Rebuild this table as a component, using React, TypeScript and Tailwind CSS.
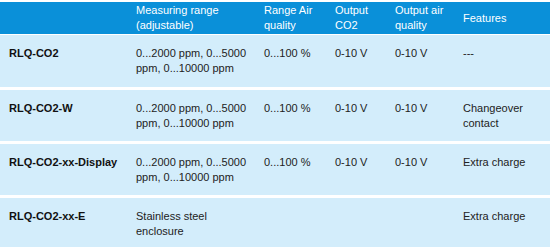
import React from "react";

type Row = {
  model: string;
  range: string;
  air: string;
  co2: string;
  outAir: string;
  features: string;
};

const rows: Row[] = [
  {
    model: "RLQ-CO2",
    range: "0...2000 ppm, 0...5000 ppm, 0...10000 ppm",
    air: "0...100 %",
    co2: "0-10 V",
    outAir: "0-10 V",
    features: "---",
  },
  {
    model: "RLQ-CO2-W",
    range: "0...2000 ppm, 0...5000 ppm, 0...10000 ppm",
    air: "0...100 %",
    co2: "0-10 V",
    outAir: "0-10 V",
    features: "Changeover contact",
  },
  {
    model: "RLQ-CO2-xx-Display",
    range: "0...2000 ppm, 0...5000 ppm, 0...10000 ppm",
    air: "0...100 %",
    co2: "0-10 V",
    outAir: "0-10 V",
    features: "Extra charge",
  },
  {
    model: "RLQ-CO2-xx-E",
    range: "Stainless steel enclosure",
    air: "",
    co2: "",
    outAir: "",
    features: "Extra charge",
  },
];

const cols = "grid grid-cols-[127px_128px_71px_60px_68px_1fr]";

export default function App() {
  return (
    <div className="w-[550px] h-[247px] overflow-hidden bg-white pt-[2px] font-['Liberation_Sans',Arial,sans-serif] text-[11px] leading-[15px]">
      {/* header */}
      <div className={`${cols} h-[32px] items-center bg-[#0a90d9] text-white`}>
        <div className="pl-[9px]" />
        <div className="pl-[9px] pr-[4px]">Measuring range (adjustable)</div>
        <div className="pl-[9px]">Range Air quality</div>
        <div className="pl-[9px]">Output CO2</div>
        <div className="pl-[9px]">Output air quality</div>
        <div className="pl-[9px]">Features</div>
      </div>

      <div className="flex flex-col gap-[3px] pt-[1px]">
        {rows.map((row, i) => (
          <div
            key={row.model}
            className={`${cols} bg-[#d3edfb] pt-[11px] text-[#222] ${
              i === 0 ? "pb-[11px]" : i === 3 ? "pb-[20px]" : "pb-[10px]"
            }`}
          >
            <div className="pl-[9px] font-bold text-[#111]">{row.model}</div>
            <div className="pl-[9px] pr-[4px]">{row.range}</div>
            <div className="pl-[9px]">{row.air}</div>
            <div className="pl-[9px]">{row.co2}</div>
            <div className="pl-[9px]">{row.outAir}</div>
            <div className="pl-[9px]">{row.features}</div>
          </div>
        ))}
      </div>
    </div>
  );
}
